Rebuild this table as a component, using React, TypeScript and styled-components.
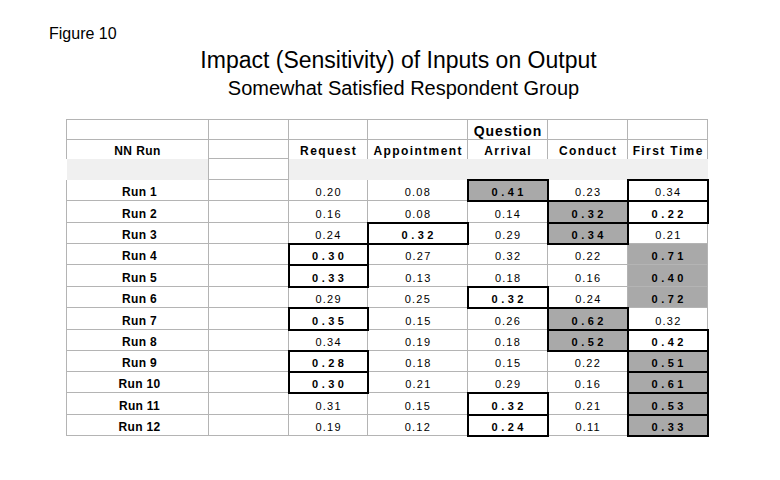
import React from 'react';
import styled, { createGlobalStyle, css } from 'styled-components';

const Global = createGlobalStyle`
  html, body { margin: 0; padding: 0; background: #ffffff; }
  body {
    width: 780px;
    height: 480px;
    overflow: hidden;
    font-family: "Liberation Sans", Arial, Helvetica, sans-serif;
    color: #000;
  }
`;

const LINE = '#b4b4b4';
const FILL = '#a9a9a9';
const BAND = '#f0f0f0';

const Page = styled.div`
  width: 780px;
  height: 480px;
  box-sizing: border-box;
  padding-top: 26px;
  display: flex;
  flex-direction: column;
`;

const FigureLabel = styled.div`
  font-size: 16px;
  line-height: 16px;
  padding-left: 49px;
`;

const Title = styled.h1`
  margin: 7px 0 0;
  padding-left: 17px;
  font-weight: normal;
  font-size: 23px;
  line-height: 23px;
  text-align: center;
`;

const Subtitle = styled.h2`
  margin: 6px 0 0;
  padding-left: 27px;
  font-weight: normal;
  font-size: 20px;
  line-height: 20px;
  text-align: center;
`;

const Sheet = styled.table`
  margin: 21px 0 0 66px;
  width: 641px;
  border-collapse: collapse;
  table-layout: fixed;
`;

const Row = styled.tr<{ $h: number }>`
  height: ${(p) => p.$h}px;
`;

const cellBase = css`
  padding: 0 0 2px;
  vertical-align: bottom;
  text-align: center;
  white-space: nowrap;
  border: 1px solid ${LINE};
`;

const HeadCell = styled.th<{ $big?: boolean; $open?: boolean }>`
  ${cellBase};
  font-weight: bold;
  font-size: ${(p) => (p.$big ? 14 : 12)}px;
  line-height: 12px;
  letter-spacing: ${(p) => (p.$big ? 1 : 1.4)}px;
  padding-left: ${(p) => (p.$big ? 1 : 1.4)}px;
  ${(p) => p.$open && css`border-bottom: none;`}
`;

const NameHead = styled.th`
  ${cellBase};
  font-weight: bold;
  font-size: 12px;
  line-height: 12px;
  letter-spacing: 0.4px;
  border-bottom: none;
`;

const BandCell = styled.td<{ $side: 'left' | 'right' }>`
  background: ${BAND};
  padding: 0;
  border: none;
  ${(p) =>
    p.$side === 'left'
      ? css`border-right: 1px solid ${LINE};`
      : css`border-left: 1px solid ${LINE};`}
`;

const BlankCell = styled.td`
  ${cellBase};
`;

const RunLabel = styled.td<{ $first?: boolean }>`
  ${cellBase};
  font-weight: bold;
  font-size: 12px;
  line-height: 12px;
  letter-spacing: 0.3px;
  padding-left: 4px;
  ${(p) => p.$first && css`border-top: none;`}
`;

type Mark = 'plain' | 'box' | 'boxBold' | 'fill' | 'shade';

const ValueCell = styled.td<{ $mark: Mark; $first?: boolean }>`
  ${cellBase};
  font-family: "Liberation Sans", Arial, sans-serif;
  font-size: 11px;
  line-height: 11px;
  letter-spacing: 1.2px;
  padding-left: 1.2px;
  padding-bottom: 2px;
  ${(p) => p.$first && css`border-top: none;`}
  ${(p) =>
    (p.$mark === 'box' || p.$mark === 'boxBold' || p.$mark === 'fill') &&
    css`border: 2px solid #000;`}
  ${(p) =>
    (p.$mark === 'boxBold' || p.$mark === 'fill' || p.$mark === 'shade') &&
    css`
      font-weight: bold;
      letter-spacing: 3.5px;
      padding-left: 3.5px;
    `}
  ${(p) => (p.$mark === 'fill' || p.$mark === 'shade') && css`background: ${FILL};`}
`;

const codes: Record<string, Mark> = { F: 'fill', B: 'boxBold', b: 'box', S: 'shade' };

const parse = (s: string): { mark: Mark; text: string } => {
  const c = s[0];
  if (codes[c]) return { mark: codes[c], text: s.slice(1) };
  return { mark: 'plain', text: s };
};

const runs: [string, string[]][] = [
  ['Run 1', ['0.20', '0.08', 'F0.41', '0.23', 'b0.34']],
  ['Run 2', ['0.16', '0.08', '0.14', 'F0.32', 'B0.22']],
  ['Run 3', ['0.24', 'B0.32', '0.29', 'F0.34', '0.21']],
  ['Run 4', ['B0.30', '0.27', '0.32', '0.22', 'S0.71']],
  ['Run 5', ['B0.33', '0.13', '0.18', '0.16', 'S0.40']],
  ['Run 6', ['0.29', '0.25', 'B0.32', '0.24', 'S0.72']],
  ['Run 7', ['B0.35', '0.15', '0.26', 'F0.62', '0.32']],
  ['Run 8', ['0.34', '0.19', '0.18', 'F0.52', 'B0.42']],
  ['Run 9', ['B0.28', '0.18', '0.15', '0.22', 'F0.51']],
  ['Run 10', ['B0.30', '0.21', '0.29', '0.16', 'F0.61']],
  ['Run 11', ['0.31', '0.15', 'B0.32', '0.21', 'F0.53']],
  ['Run 12', ['0.19', '0.12', 'B0.24', '0.11', 'F0.33']],
];

const heights = [21, 22, 21, 21, 22, 21, 22, 21, 21, 21, 22, 21];

const columns = ['Request', 'Appointment', 'Arrival', 'Conduct', 'First Time'];
const widths = [142, 80, 79, 100, 80, 80, 80];

export default function App() {
  return (
    <>
      <Global />
      <Page>
        <FigureLabel>Figure 10</FigureLabel>
        <Title>Impact (Sensitivity) of Inputs on Output</Title>
        <Subtitle>Somewhat Satisfied Respondent Group</Subtitle>
        <Sheet>
          <colgroup>
            {widths.map((w, i) => (
              <col key={i} style={{ width: w }} />
            ))}
          </colgroup>
          <thead>
            <Row $h={20}>
              <HeadCell />
              <HeadCell />
              <HeadCell />
              <HeadCell />
              <HeadCell $big>Question</HeadCell>
              <HeadCell />
              <HeadCell />
            </Row>
            <Row $h={19}>
              <NameHead>NN Run</NameHead>
              <HeadCell />
              {columns.map((c) => (
                <HeadCell key={c} $open>
                  {c}
                </HeadCell>
              ))}
            </Row>
          </thead>
          <tbody>
            <Row $h={21}>
              <BandCell $side="left" />
              <BlankCell />
              <BandCell $side="right" colSpan={5} />
            </Row>
            {runs.map(([name, vals], r) => (
              <Row key={name} $h={heights[r]}>
                <RunLabel $first={r === 0}>{name}</RunLabel>
                <BlankCell />
                {vals.map((v, i) => {
                  const { mark, text } = parse(v);
                  return (
                    <ValueCell key={i} $mark={mark} $first={r === 0}>
                      {text}
                    </ValueCell>
                  );
                })}
              </Row>
            ))}
          </tbody>
        </Sheet>
      </Page>
    </>
  );
}
